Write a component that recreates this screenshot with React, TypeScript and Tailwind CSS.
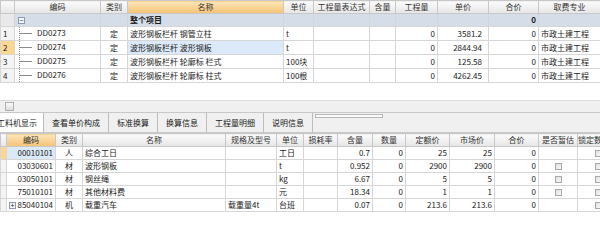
import React from 'react';

const font = { fontFamily: '"Noto Sans CJK SC", "Noto Sans", sans-serif' };

const topRows = [
	{ n: '1', code: 'DD0273', name: '波形钢板栏杆 钢管立柱', unit: 't', price: '3581.2' },
	{ n: '2', code: 'DD0274', name: '波形钢板栏杆 波形钢板', unit: 't', price: '2844.94' },
	{ n: '3', code: 'DD0275', name: '波形钢板栏杆 轮廓标 栏式', unit: '100块', price: '125.58' },
	{ n: '4', code: 'DD0276', name: '波形钢板栏杆 轮廓标 柱式', unit: '100根', price: '4262.45' },
];

const bottomRows = [
	{ code: '00010101', type: '人', name: '综合工日', spec: '', unit: '工日', qty: '0.7', base: '25', market: '25', est: false, plus: false },
	{ code: '03030601', type: '材', name: '波形钢板', spec: '', unit: 't', qty: '0.952', base: '2900', market: '2900', est: true, plus: false },
	{ code: '03050101', type: '材', name: '钢丝绳', spec: '', unit: 'kg', qty: '6.67', base: '5', market: '5', est: true, plus: false },
	{ code: '75010101', type: '材', name: '其他材料费', spec: '', unit: '元', qty: '18.34', base: '1', market: '1', est: true, plus: false },
	{ code: '85040104', type: '机', name: '载重汽车', spec: '载重量4t', unit: '台班', qty: '0.07', base: '213.6', market: '213.6', est: false, plus: true },
];

const td = 'border border-[#d6d6d6] h-[13px] p-0 px-[2px] whitespace-nowrap overflow-hidden leading-[12px]';
const th = 'border border-[#c8c8c8] h-[13px] p-0 font-normal text-center whitespace-nowrap overflow-hidden leading-[12px] bg-gradient-to-b from-[#fbfbfb] to-[#e6e6e6] text-[#333]';
const thOrange = 'border border-[#c8c8c8] h-[13px] p-0 font-normal text-center whitespace-nowrap overflow-hidden leading-[12px] bg-gradient-to-b from-[#fde6b8] to-[#f5c273] text-[#333]';

function Check() {
	return <span className="inline-block w-[7px] h-[7px] border border-[#a9a9a9] bg-gradient-to-br from-[#e2e2e2] to-[#f8f8f8] align-middle" />;
}

function Tree({ last }: { last: boolean }) {
	return (
		<span className={`relative inline-block w-[18px] h-[13px] align-top ml-[4px] border-l border-dotted border-[#8a8a8a] ${last ? 'h-[7px]' : ''}`}>
			<span className="absolute left-0 top-[6px] w-[12px] border-t border-[#8a8a8a]" />
		</span>
	);
}

export default function App() {
	return (
		<div className="w-[600px] h-[234px] overflow-hidden bg-white text-[8px] text-[#1a1a1a]" style={font}>
			{/* 上表 */}
			<div className="h-[100px] bg-white">
				<table className="table-fixed border-collapse w-[600px]">
					<colgroup>
						<col className="w-[14px]" />
						<col className="w-[86px]" />
						<col className="w-[27px]" />
						<col className="w-[156px]" />
						<col className="w-[30px]" />
						<col className="w-[56px]" />
						<col className="w-[26px]" />
						<col className="w-[42px]" />
						<col className="w-[51px]" />
						<col className="w-[50px]" />
						<col className="w-[62px]" />
					</colgroup>
					<thead>
						<tr>
							<th className={th}></th>
							<th className={th}>编码</th>
							<th className={th}>类别</th>
							<th className={thOrange}>名称</th>
							<th className={th}>单位</th>
							<th className={th}>工程量表达式</th>
							<th className={th}>含量</th>
							<th className={th}>工程量</th>
							<th className={th}>单价</th>
							<th className={th}>合价</th>
							<th className={th}>取费专业</th>
						</tr>
					</thead>
					<tbody>
						<tr className="bg-[#d5dde9]">
							<td className={`${td} bg-[#e9e9e9]`}></td>
							<td className={td}>
								<span className="inline-flex items-center justify-center w-[7px] h-[7px] ml-[1px] border border-[#8e9aab] bg-[#f2f4f8] text-[7px] leading-none align-middle">−</span>
							</td>
							<td className={td}></td>
							<td className={`${td} font-bold`}>整个项目</td>
							<td className={td}></td>
							<td className={td}></td>
							<td className={td}></td>
							<td className={td}></td>
							<td className={td}></td>
							<td className={`${td} text-right font-bold`}>0</td>
							<td className={td}></td>
						</tr>
						{topRows.map((r, i) => (
							<tr key={r.code}>
								<td className={`${td} ${i === 1 ? 'bg-[#fcd792]' : 'bg-[#f4f4f4]'}`}>{r.n}</td>
								<td className={`${td} pl-0`}>
									<Tree last={i === topRows.length - 1} />
									<span>{r.code}</span>
								</td>
								<td className={`${td} text-center`}>定</td>
								<td className={`${td} ${i === 1 ? 'bg-[#dce9f8]' : ''}`}>{r.name}</td>
								<td className={td}>{r.unit}</td>
								<td className={td}></td>
								<td className={td}></td>
								<td className={`${td} text-right`}>0</td>
								<td className={`${td} text-right pr-[6px]`}>{r.price}</td>
								<td className={`${td} text-right`}>0</td>
								<td className={td}>市政土建工程</td>
							</tr>
						))}
					</tbody>
				</table>
			</div>

			{/* 滚动条 */}
			<div className="h-[13px] bg-[#f0f0f0] border-t border-[#dcdcdc] border-b border-b-[#c8c8c8] flex items-center pl-[5px]">
				<span className="w-[9px] h-[9px] border border-[#b0b0b0] bg-gradient-to-b from-[#fafafa] to-[#dedede]" />
			</div>

			{/* 页签 */}
			<div className="h-[20px] bg-[#f0f0f0] flex items-stretch border-b border-[#c8c8c8]">
				{['工料机显示', '查看单价构成', '标准换算', '换算信息', '工程量明细', '说明信息'].map((t, i) => (
					<div
						key={t}
						className={`flex items-center border-r border-[#bdbdbd] ${i === 0 ? 'bg-white pr-[6px] -ml-[3px]' : 'px-[8px]'}`}
					>
						{t}
					</div>
				))}
				<div className="ml-[2px] mt-[1px] w-[68px] h-[4px] border border-[#b8b8b8] bg-[#fafafa]" />
			</div>

			{/* 下表 */}
			<table className="table-fixed border-collapse w-[617px]">
				<colgroup>
					<col className="w-[6px]" />
					<col className="w-[49px]" />
					<col className="w-[27px]" />
					<col className="w-[143px]" />
					<col className="w-[51px]" />
					<col className="w-[27px]" />
					<col className="w-[34px]" />
					<col className="w-[35px]" />
					<col className="w-[33px]" />
					<col className="w-[44px]" />
					<col className="w-[45px]" />
					<col className="w-[44px]" />
					<col className="w-[39px]" />
					<col className="w-[40px]" />
				</colgroup>
				<thead>
					<tr>
						<th className={th}></th>
						<th className={thOrange}>编码</th>
						<th className={th}>类别</th>
						<th className={th}>名称</th>
						<th className={th}>规格及型号</th>
						<th className={th}>单位</th>
						<th className={th}>损耗率</th>
						<th className={th}>含量</th>
						<th className={th}>数量</th>
						<th className={th}>定额价</th>
						<th className={th}>市场价</th>
						<th className={th}>合价</th>
						<th className={th}>是否暂估</th>
						<th className={`${th} text-left`}>锁定数量</th>
					</tr>
				</thead>
				<tbody>
					{bottomRows.map((r, i) => (
						<tr key={r.code}>
							<td className={`${td} px-0 ${i === 0 ? 'bg-[#fcd792]' : 'bg-[#f4f4f4]'}`}></td>
							<td className={`${td} text-right ${i === 0 ? 'bg-[#dce9f8]' : ''}`}>
								{r.plus && (
									<span className="float-left mt-[3px] w-[7px] h-[7px] border border-[#8e9aab] bg-[#f4f4f4] text-[7px] leading-[5px] text-center">+</span>
								)}
								{r.code}
							</td>
							<td className={`${td} text-center`}>{r.type}</td>
							<td className={td}>{r.name}</td>
							<td className={td}>{r.spec}</td>
							<td className={td}>{r.unit}</td>
							<td className={td}></td>
							<td className={`${td} text-right`}>{r.qty}</td>
							<td className={`${td} text-right`}>0</td>
							<td className={`${td} text-right`}>{r.base}</td>
							<td className={`${td} text-right`}>{r.market}</td>
							<td className={`${td} text-right`}>0</td>
							<td className={`${td} text-center`}>{r.est && <Check />}</td>
							<td className={`${td} pl-[17px]`}><Check /></td>
						</tr>
					))}
				</tbody>
			</table>
		</div>
	);
}
